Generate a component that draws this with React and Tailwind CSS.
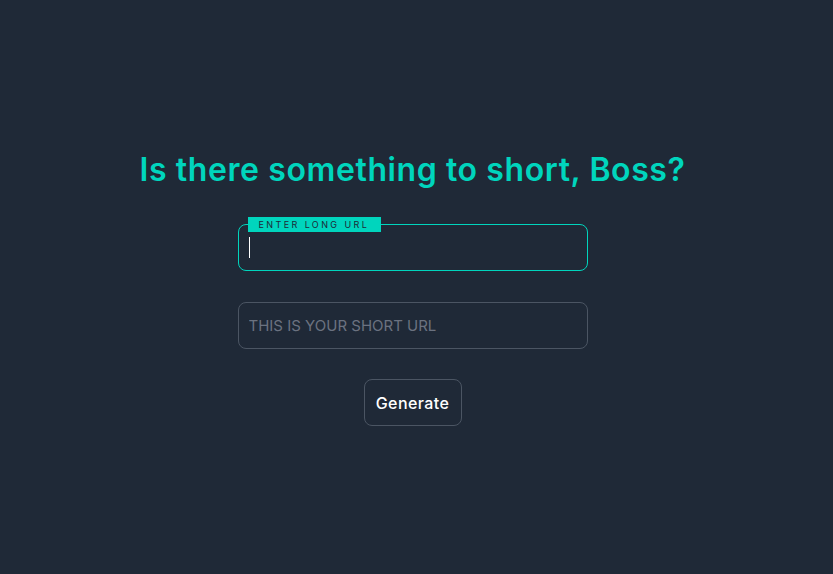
import React from "react";

export default function App() {
  return (
    <div className="min-h-screen w-full bg-[#1f2937] flex flex-col items-center justify-center pr-[8px] pt-[4px]" style={{ fontFamily: "Inter, 'Noto Sans', sans-serif" }}>
      <h1 className="text-[32px] leading-[36px] font-semibold text-[#00d5bd] tracking-[0.6px]">
        Is there something to short, Boss?
      </h1>
      <div className="relative mt-[36px] w-[350px]">
        <input
          className="w-full h-[47px] rounded-lg border border-[#00d5bd] bg-transparent px-[10px] text-white outline-none text-[15px]"
        />
        <span className="absolute left-[10px] top-[-7px] bg-[#00d5bd] text-[#1f2937] text-[9px] leading-[15px] tracking-[2.4px] pl-[11px] pr-[12px] uppercase">
          Enter long URL
        </span>
        <span className="absolute left-[11px] top-[13px] w-px h-[21px] bg-white" />
      </div>
      <input
        placeholder="THIS IS YOUR SHORT URL"
        className="mt-[31px] w-[350px] h-[47px] rounded-lg border border-[#4b5563] bg-transparent px-[10px] text-white outline-none text-[15px] placeholder:text-[#6b7280]"
      />
      <button className="mt-[30px] w-[98px] h-[47px] rounded-lg border border-[#4b5563] text-white text-[16px] font-medium tracking-[0.4px]">
        Generate
      </button>
    </div>
  );
}
